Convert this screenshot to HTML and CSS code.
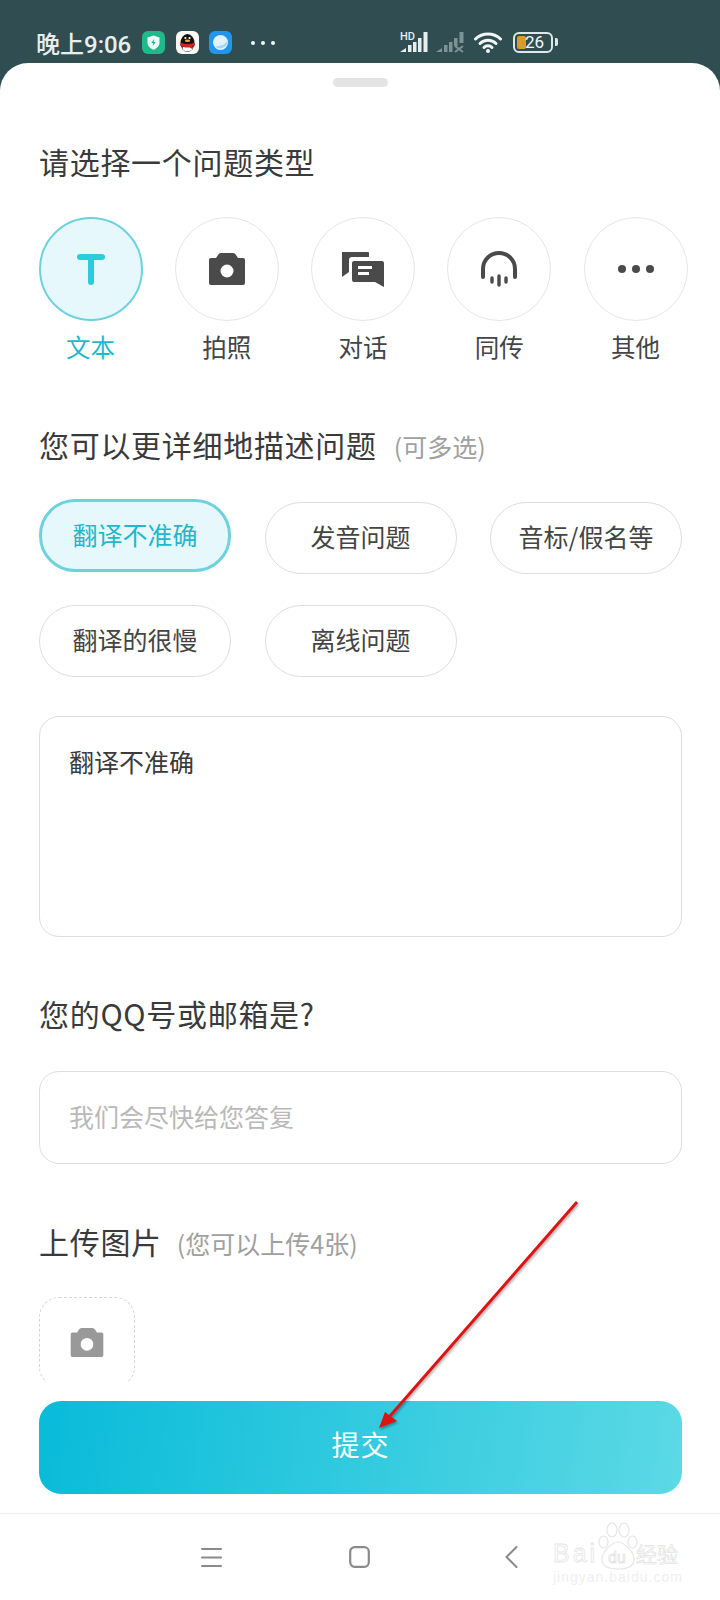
FILE: index.html
```html
<!DOCTYPE html>
<html lang="zh-CN">

<head>
    <meta charset="UTF-8">
    <meta name="viewport" content="width=device-width, initial-scale=1.0">
    <title>问题反馈</title>
    <link rel="stylesheet" href="styles.css">
</head>

<body>
    <!-- Status bar -->
    <div class="status-bar">
        <div class="status-left">
            <span class="status-time">晚上9:06</span>
            <div class="app-icons">
                <svg class="app-icon" viewBox="0 0 23 23">
                    <rect width="23" height="23" rx="6" fill="#22b98a"/>
                    <path d="M11.5 4.5l6 2v5c0 3.6-2.6 6-6 7.200-3.400-1.200-6-3.600-6-7.200v-5z" fill="#e9faf4"/>
                    <path d="M12.300 7.800l-3 4.200h2l-.6 3.200 3-4.300h-2z" fill="#22b98a"/>
                </svg>
                <svg class="app-icon" viewBox="0 0 23 23">
                    <rect width="23" height="23" rx="6" fill="#fbf9f4"/>
                    <ellipse cx="11.500" cy="12" rx="7" ry="9" fill="#111"/>
                    <ellipse cx="11.500" cy="17" rx="5" ry="3.600" fill="#fff"/>
                    <path d="M4.500 11.500q7 3 14 0l.5 3q-1.500.8-3 1.200l.4 2.300-2.600-1.600q-2.300.4-4.600 0q-2.500-.4-5.200-1.900z" fill="#d3202a"/>
                    <ellipse cx="11.500" cy="9.800" rx="2.600" ry="1.200" fill="#f0b32a"/>
                    <circle cx="9.400" cy="7" r="1.100" fill="#fff"/>
                    <circle cx="13.600" cy="7" r="1.100" fill="#fff"/>
                </svg>
                <svg class="app-icon" viewBox="0 0 23 23">
                    <rect width="23" height="23" rx="6" fill="#2196ee"/>
                    <circle cx="11.500" cy="11.500" r="7.500" fill="#e4f2fd"/>
                    <path d="M6 15.500a7.500 7.500 0 0 0 12.500-6.500q-1.500 5.500-12.500 6.500z" fill="#a9d6f8"/>
                </svg>
            </div>
            <div class="status-dots"><i></i><i></i><i></i></div>
        </div>
        <div class="status-right">
            <svg class="signal" viewBox="0 0 28 22">
                <text x="0" y="8.500" class="signal-hd">HD</text>
                <path d="M0 21l6-4v4zM8 21v-7h3.500v7zM13 21v-10h3.500v10zM18 21V7h3.500v14zM23.500 21V1h4v20z" fill="#e6eeee"/>
            </svg>
            <svg class="signal signal-off" viewBox="0 0 28 22">
                <path d="M0 21l6-4v4zM8 21v-7h3.500v7zM13 21v-10h3.500v10zM18 15V7h3.500v8zM23.500 12V1h4v11z" fill="#7d9295"/>
                <path d="M19 15l8 6M27 15l-8 6" stroke="#7d9295" stroke-width="2"/>
            </svg>
            <svg class="wifi" viewBox="0 0 28 22">
                <g fill="none" stroke="#f0f5f5" stroke-width="3" stroke-linecap="round">
                    <path d="M1.500 8a18 18 0 0 1 25 0"/>
                    <path d="M6 12.500a11.500 11.500 0 0 1 16 0"/>
                    <path d="M10 16.500a5.500 5.500 0 0 1 8 0"/>
                </g>
                <circle cx="14" cy="20" r="2" fill="#f0f5f5"/>
            </svg>
            <div class="battery">
                <div class="battery-body">
                    <span class="battery-fill"></span>
                    <span class="battery-num">26</span>
                </div>
                <span class="battery-cap"></span>
            </div>
        </div>
    </div>

    <!-- Feedback sheet -->
    <div class="sheet">
        <div class="handle"></div>
        <div class="form">
            <h2 class="title-first">请选择一个问题类型</h2>

            <div class="types">
                <div class="type active">
                    <div class="type-circle">
                        <svg width="28" height="32" viewBox="0 0 28 32">
                            <path d="M3 4h22M14 4v25" fill="none" stroke="#2ecbdd" stroke-width="6" stroke-linecap="round"/>
                        </svg>
                    </div>
                    <span>文本</span>
                </div>
                <div class="type">
                    <div class="type-circle">
                        <svg width="36" height="32" viewBox="0 0 36 32">
                            <path class="camera" fill-rule="evenodd" d="M12 0h12q2 0 3 2l2 3h5q2 0 2 2v23q0 2-2 2H2q-2 0-2-2V7q0-2 2-2h5l2-3q1-2 3-2zM18 11.500a6.500 6.500 0 1 0 0 13 6.500 6.500 0 0 0 0-13z"/>
                        </svg>
                    </div>
                    <span>拍照</span>
                </div>
                <div class="type">
                    <div class="type-circle">
                        <svg width="42" height="35" viewBox="0 0 42 35">
                            <path class="camera" d="M0 0h26q1 0 1 1v4H10q-3 0-3 3v12l-7 5z"/>
                            <path class="camera" fill-rule="evenodd" d="M12 9h28q2 0 2 2v24l-9-5H12q-2 0-2-2V11q0-2 2-2zM16 14v3h14v-3zM16 20v3h11v-3z"/>
                        </svg>
                    </div>
                    <span>对话</span>
                </div>
                <div class="type">
                    <div class="type-circle">
                        <svg width="36" height="36" viewBox="0 0 36 36">
                            <path d="M2 26V18a16 16 0 0 1 32 0v8" fill="none" stroke="#4a4a4a" stroke-width="4" stroke-linecap="round"/>
                            <path d="M11 27v4M18 25v9M25 27v4" fill="none" stroke="#4a4a4a" stroke-width="3.400" stroke-linecap="round"/>
                        </svg>
                    </div>
                    <span>同传</span>
                </div>
                <div class="type">
                    <div class="type-circle">
                        <div class="more-dots"><i></i><i></i><i></i></div>
                    </div>
                    <span>其他</span>
                </div>
            </div>

            <h2 class="title-detail">您可以更详细地描述问题<small>(可多选)</small></h2>

            <div class="chips">
                <div class="chip active">翻译不准确</div>
                <div class="chip">发音问题</div>
                <div class="chip">音标/假名等</div>
                <div class="chip">翻译的很慢</div>
                <div class="chip">离线问题</div>
            </div>

            <div class="text-box">翻译不准确</div>

            <h2 class="title-contact">您的QQ号或邮箱是?</h2>
            <div class="input-box">我们会尽快给您答复</div>

            <h2 class="title-upload">上传图片<small>(您可以上传4张)</small></h2>
            <div class="upload">
                <svg width="34" height="29" viewBox="0 0 36 32">
                    <path class="camera-light" fill-rule="evenodd" d="M12 0h12q2 0 3 2l2 3h5q2 0 2 2v23q0 2-2 2H2q-2 0-2-2V7q0-2 2-2h5l2-3q1-2 3-2zM18 11a7 7 0 1 0 0 14 7 7 0 0 0 0-14z"/>
                </svg>
            </div>
        </div>

        <div class="submit-wrap">
            <button class="submit">提交</button>
        </div>

        <!-- Navigation bar -->
        <div class="nav-bar">
            <svg width="21" height="21" viewBox="0 0 21 21">
                <path d="M1 2h19M1 10.500h19M1 19h19" stroke="#8a8a8a" stroke-width="2" stroke-linecap="round"/>
            </svg>
            <svg width="21" height="22" viewBox="0 0 21 22">
                <rect x="1.200" y="1.200" width="18.600" height="19.600" rx="4.500" fill="none" stroke="#8a8a8a" stroke-width="2.200"/>
            </svg>
            <svg class="nav-back" width="13" height="22" viewBox="0 0 13 22">
                <path d="M11.500 1L1.500 11l10 10" fill="none" stroke="#8a8a8a" stroke-width="2" stroke-linecap="round"/>
            </svg>
        </div>
    </div>

    <!-- Annotation arrow drawn over the screenshot -->
    <svg class="arrow" width="220" height="250" viewBox="0 0 220 250">
        <g class="arrow-shape">
            <path d="M207 12L20 226" stroke="#e01212" stroke-width="3" fill="none"/>
            <path d="M9 238l6-16 12 9z" fill="#e01212"/>
        </g>
    </svg>

    <!-- Baidu watermark -->
    <div class="watermark">
        <span class="wm-bai">Bai</span>
        <svg class="paw" width="40" height="48" viewBox="0 0 40 48">
            <g fill="#fff" stroke="#e6e6e6" stroke-width="1.200">
                <ellipse cx="5.500" cy="20" rx="4.500" ry="6"/>
                <ellipse cx="14" cy="8" rx="5" ry="7"/>
                <ellipse cx="26" cy="8" rx="5" ry="7"/>
                <ellipse cx="34.500" cy="20" rx="4.500" ry="6"/>
                <path d="M20 20c6 0 16 10 16 17 0 7-6 10-16 10s-16-3-16-10c0-7 10-17 16-17z"/>
            </g>
        </svg>
        <span class="wm-du">du</span>
        <span class="wm-jy">经验</span>
        <div class="wm-url">jingyan.baidu.com</div>
    </div>
</body>

</html>
```

FILE: styles.css
```css
/* General Styles */
* {
    box-sizing: border-box;
}

body {
    font-family: 'Noto Sans CJK SC', 'Noto Sans', sans-serif;
    margin: 0;
    width: 720px;
    height: 1600px;
    overflow: hidden;
    position: relative;
    background: #304d52;
    color: #333;
    display: flex;
    flex-direction: column;
}

/* Status bar */
.status-bar {
    height: 63px;
    padding: 31px 0 0 36px;
    display: flex;
    flex-shrink: 0;
}

.status-left {
    display: flex;
    align-items: center;
    height: 23px;
}

.status-time {
    font-family: 'Roboto', 'Noto Sans CJK SC', sans-serif;
    font-size: 24px;
    font-weight: 500;
    color: #e8eeee;
    width: 106px;
    white-space: nowrap;
}

.app-icons {
    display: flex;
    gap: 10.5px;
}

.app-icon {
    width: 23px;
    height: 23px;
}

.status-dots {
    display: flex;
    gap: 6px;
    margin-left: 19px;
}

.status-dots i {
    width: 4px;
    height: 4px;
    border-radius: 50%;
    background: #f0f5f5;
}

.status-right {
    display: flex;
    align-items: center;
    height: 22px;
    margin-left: 125px;
}

.signal {
    width: 28px;
    height: 22px;
}

.signal-off {
    margin-left: 8px;
}

.signal-hd {
    font-family: 'Roboto', sans-serif;
    font-size: 11px;
    font-weight: 500;
    fill: #e6eeee;
}

.wifi {
    width: 28px;
    height: 22px;
    margin-left: 10px;
}

.battery {
    display: flex;
    align-items: center;
    margin-left: 11px;
}

.battery-body {
    position: relative;
    width: 40px;
    height: 21px;
    border: 2px solid #dfe8e8;
    border-radius: 6px;
    padding-left: 10px;
    display: flex;
    align-items: center;
}

.battery-fill {
    position: absolute;
    left: 2px;
    top: 2px;
    width: 9px;
    height: 13px;
    border-radius: 2px;
    background: #dc9a2a;
}

.battery-num {
    position: relative;
    font-family: 'Roboto', sans-serif;
    font-size: 17px;
    line-height: 17px;
    color: #f4f8f8;
}

.battery-cap {
    width: 3px;
    height: 8px;
    margin-left: 2px;
    border-radius: 0 2px 2px 0;
    background: #dfe8e8;
}

/* Sheet */
.sheet {
    flex: 1;
    min-height: 0;
    display: flex;
    flex-direction: column;
    background: #fff;
    border-radius: 28px 28px 0 0;
}

.handle {
    flex-shrink: 0;
    width: 55px;
    height: 9px;
    margin: 15px auto 0;
    border-radius: 5px;
    background: #e4e4e4;
}

.form {
    flex: 1;
    min-height: 0;
    overflow: hidden;
    padding: 0 38px 0 39px;
}

h2 {
    margin: 0;
    font-size: 30px;
    font-weight: 400;
    line-height: 40px;
    letter-spacing: 0.7px;
    color: #3a3a3a;
    white-space: nowrap;
}

h2 small {
    margin-left: 17px;
    font-size: 25px;
    letter-spacing: 0;
    color: #a0a0a0;
}

.title-first {
    margin-top: 54px;
}

.title-detail {
    margin-top: 61px;
}

.title-contact {
    margin-top: 56px;
}

.title-upload {
    margin-top: 57px;
}

.title-upload small {
    margin-left: 15px;
}

/* Question type row */
.types {
    display: flex;
    gap: 32.25px;
    margin: 36px 0 0 -0.5px;
    width: 650px;
}

.type {
    width: 104px;
    flex-shrink: 0;
    display: flex;
    flex-direction: column;
    align-items: center;
    gap: 10px;
    font-size: 24.5px;
    line-height: 32px;
    color: #444;
}

.type-circle {
    width: 104px;
    height: 104px;
    border: 1.5px solid #e6e6e6;
    border-radius: 50%;
    display: flex;
    align-items: center;
    justify-content: center;
}

.type.active {
    color: #1fb8cc;
}

.type.active .type-circle {
    background: #e6f8fb;
    border: 2px solid #6dd2de;
}

.camera {
    fill: #4a4a4a;
}

.camera-light {
    fill: #999;
}

.more-dots {
    display: flex;
    gap: 6px;
}

.more-dots i {
    width: 8px;
    height: 8px;
    border-radius: 50%;
    background: #4a4a4a;
}

/* Chips */
.chips {
    display: grid;
    grid-template-columns: repeat(3, 192px);
    column-gap: 33.5px;
    row-gap: 31px;
    margin-top: 36px;
}

.chip {
    height: 72px;
    padding-bottom: 4px;
    border: 1px solid #dedede;
    border-radius: 36px;
    display: flex;
    align-items: center;
    justify-content: center;
    font-size: 25px;
    color: #444;
    white-space: nowrap;
}

.chip.active {
    height: 73px;
    margin-top: -3px;
    border: 3px solid #6dd2de;
    background: #e6f8fb;
    color: #1fb8cc;
}

/* Inputs */
.text-box {
    height: 221px;
    margin-top: 39px;
    padding: 25px 29px;
    border: 1px solid #dedede;
    border-radius: 20px;
    font-size: 25px;
    line-height: 38px;
    color: #3a3a3a;
}

.input-box {
    height: 93px;
    margin-top: 38px;
    padding: 0 29px 4px;
    border: 1px solid #dedede;
    border-radius: 20px;
    display: flex;
    align-items: center;
    font-size: 25px;
    color: #b9b9b9;
}

.upload {
    width: 96px;
    height: 90px;
    margin-top: 34px;
    border: 1.5px dashed #d6d6d6;
    border-radius: 20px;
    display: flex;
    align-items: center;
    justify-content: center;
}

/* Submit */
.submit-wrap {
    flex-shrink: 0;
    padding: 19px 38px 19px 39px;
}

.submit {
    display: block;
    width: 100%;
    height: 93px;
    padding: 0 0 8px;
    border: none;
    border-radius: 22px;
    background: linear-gradient(100deg, #08bbd9, #5cd9e5);
    color: #fff;
    font-family: inherit;
    font-size: 28px;
    letter-spacing: 1px;
}

/* Navigation bar */
.nav-bar {
    flex-shrink: 0;
    height: 87px;
    border-top: 1px solid #eee;
    padding-left: 201px;
    display: flex;
    align-items: center;
    gap: 127px;
}

.nav-back {
    margin-left: 8px;
}

/* Overlays */
.arrow {
    position: absolute;
    left: 370px;
    top: 1190px;
}

.arrow-shape {
    filter: drop-shadow(1px 2px 1px rgba(0, 0, 0, 0.3));
}

.watermark {
    position: absolute;
    left: 553px;
    top: 1522px;
    width: 128px;
    height: 70px;
    font-family: 'Liberation Sans', 'Noto Sans CJK SC', sans-serif;
}

.paw {
    position: absolute;
    left: 45px;
    top: 0;
}

.wm-bai {
    position: absolute;
    left: 0;
    top: 17px;
    font-size: 25px;
    line-height: 28px;
    letter-spacing: 3px;
    color: #fff;
    -webkit-text-stroke: 0.8px #e6e6e6;
}

.wm-du {
    position: absolute;
    left: 55px;
    top: 27px;
    font-size: 16px;
    line-height: 18px;
    color: #fff;
    -webkit-text-stroke: 0.7px #e0e0e0;
}

.wm-jy {
    position: absolute;
    left: 83px;
    top: 20px;
    font-size: 21px;
    line-height: 26px;
    color: #fff;
    -webkit-text-stroke: 0.7px #e2e2e2;
}

.wm-url {
    position: absolute;
    left: 0;
    top: 47px;
    font-size: 14px;
    letter-spacing: 1px;
    white-space: nowrap;
    color: #efefef;
}
```
